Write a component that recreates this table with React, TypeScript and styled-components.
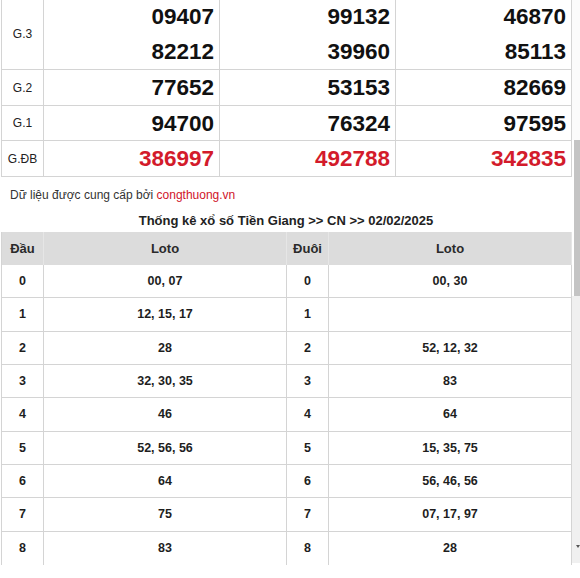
import React from "react";
import styled, { createGlobalStyle } from "styled-components";

const GlobalStyle = createGlobalStyle`
  html, body { margin: 0; padding: 0; background: #ffffff; }
  body { font-family: "Liberation Sans", Arial, sans-serif; overflow: hidden; }
  * { box-sizing: border-box; }
`;

const Page = styled.div`
  display: flex;
  width: 580px;
  height: 578px;
  overflow: hidden;
  background: #fff;
`;

const Main = styled.div`
  width: 572px;
  display: flex;
  flex-direction: column;
  margin-top: -1px;
`;

const ResultTable = styled.div`
  margin-left: 1px;
  border-left: 1px solid #d4d4d4;
  display: grid;
  grid-template-columns: 42px 176px 176px 176px;
`;

const PrizeRow = styled.div<{ $h: number }>`
  display: contents;
  & > div {
    height: ${(p) => p.$h}px;
  }
`;

const LabelCell = styled.div`
  display: flex;
  align-items: center;
  justify-content: center;
  border-right: 1px solid #d4d4d4;
  border-bottom: 1px solid #d4d4d4;
  font-size: 12px;
  color: #222;
`;

const NumberCell = styled.div`
  display: flex;
  flex-direction: column;
  justify-content: center;
  align-items: flex-end;
  padding-right: 5px;
  border-right: 1px solid #d4d4d4;
  border-bottom: 1px solid #d4d4d4;
`;

const Num = styled.div<{ $special?: boolean }>`
  font-size: 22.5px;
  font-weight: bold;
  line-height: 35px;
  color: ${(p) => (p.$special ? "#d31b2b" : "#111")};
`;

const Source = styled.p`
  margin: 10px 0 0 10px;
  font-size: 12px;
  line-height: 16px;
  color: #333;
`;

const SourceLink = styled.a`
  color: #d0142a;
  text-decoration: none;
`;

const Title = styled.h3`
  margin: 9px 0 2px;
  text-align: center;
  font-size: 13px;
  line-height: 18px;
  font-weight: bold;
  color: #222;
`;

const LotoTable = styled.div`
  margin-left: 1px;
  border-left: 1px solid #d4d4d4;
  display: grid;
  grid-template-columns: 42px 243px 42px 243px;
`;

const HeadCell = styled.div`
  height: 33px;
  display: flex;
  align-items: center;
  justify-content: center;
  background: #dcdcdc;
  border-right: 1px solid #e6e6e6;
  font-size: 13px;
  font-weight: bold;
  color: #2a2a2a;
`;

const DataCell = styled.div<{ $last?: boolean }>`
  height: 33.33px;
  display: flex;
  align-items: center;
  justify-content: center;
  border-right: 1px solid #d4d4d4;
  border-bottom: ${(p) => (p.$last ? "none" : "1px solid #d4d4d4")};
  font-size: 12.5px;
  font-weight: bold;
  color: #1e1e1e;
`;

const Scrollbar = styled.div`
  width: 8px;
  display: flex;
  flex-direction: column;
`;

const TrackTop = styled.div`
  height: 140px;
  background: #fbfbfb;
`;

const Thumb = styled.div`
  height: 156px;
  margin-left: 2px;
  background: #c4c4c4;
`;

const TrackBottom = styled.div`
  height: 267px;
  background: #f0f0f0;
  display: flex;
  flex-direction: column;
  justify-content: flex-end;
  align-items: flex-end;
  padding-bottom: 15px;
`;

const Arrow = styled.div`
  width: 0;
  height: 0;
  border-left: 2px solid transparent;
  border-right: 2px solid transparent;
  border-top: 3px solid #555;
  margin-right: 0px;
`;

type Prize = { label: string; nums: string[][]; h: number; special?: boolean };

const prizes: Prize[] = [
  { label: "G.3", nums: [["09407", "82212"], ["99132", "39960"], ["46870", "85113"]], h: 71 },
  { label: "G.2", nums: [["77652"], ["53153"], ["82669"]], h: 36 },
  { label: "G.1", nums: [["94700"], ["76324"], ["97595"]], h: 35 },
  { label: "G.ĐB", nums: [["386997"], ["492788"], ["342835"]], h: 36, special: true },
];

const dau = ["00, 07", "12, 15, 17", "28", "32, 30, 35", "46", "52, 56, 56", "64", "75", "83"];
const duoi = ["00, 30", "", "52, 12, 32", "83", "64", "15, 35, 75", "56, 46, 56", "07, 17, 97", "28"];

export default function App() {
  return (
    <>
      <GlobalStyle />
      <Page>
        <Main>
          <ResultTable>
            {prizes.map((p) => (
              <PrizeRow key={p.label} $h={p.h}>
                <LabelCell>{p.label}</LabelCell>
                {p.nums.map((col, i) => (
                  <NumberCell key={i}>
                    {col.map((n) => (
                      <Num key={n} $special={p.special}>
                        {n}
                      </Num>
                    ))}
                  </NumberCell>
                ))}
              </PrizeRow>
            ))}
          </ResultTable>
          <Source>
            Dữ liệu được cung cấp bởi <SourceLink href="#">congthuong.vn</SourceLink>
          </Source>
          <Title>Thống kê xổ số Tiền Giang &gt;&gt; CN &gt;&gt; 02/02/2025</Title>
          <LotoTable>
            <HeadCell>Đầu</HeadCell>
            <HeadCell>Loto</HeadCell>
            <HeadCell>Đuôi</HeadCell>
            <HeadCell>Loto</HeadCell>
            {dau.map((d, i) => (
              <React.Fragment key={i}>
                <DataCell $last={i === dau.length - 1}>{i}</DataCell>
                <DataCell $last={i === dau.length - 1}>{d}</DataCell>
                <DataCell $last={i === dau.length - 1}>{i}</DataCell>
                <DataCell $last={i === dau.length - 1}>{duoi[i]}</DataCell>
              </React.Fragment>
            ))}
          </LotoTable>
        </Main>
        <Scrollbar>
          <TrackTop />
          <Thumb />
          <TrackBottom>
            <Arrow />
          </TrackBottom>
        </Scrollbar>
      </Page>
    </>
  );
}
